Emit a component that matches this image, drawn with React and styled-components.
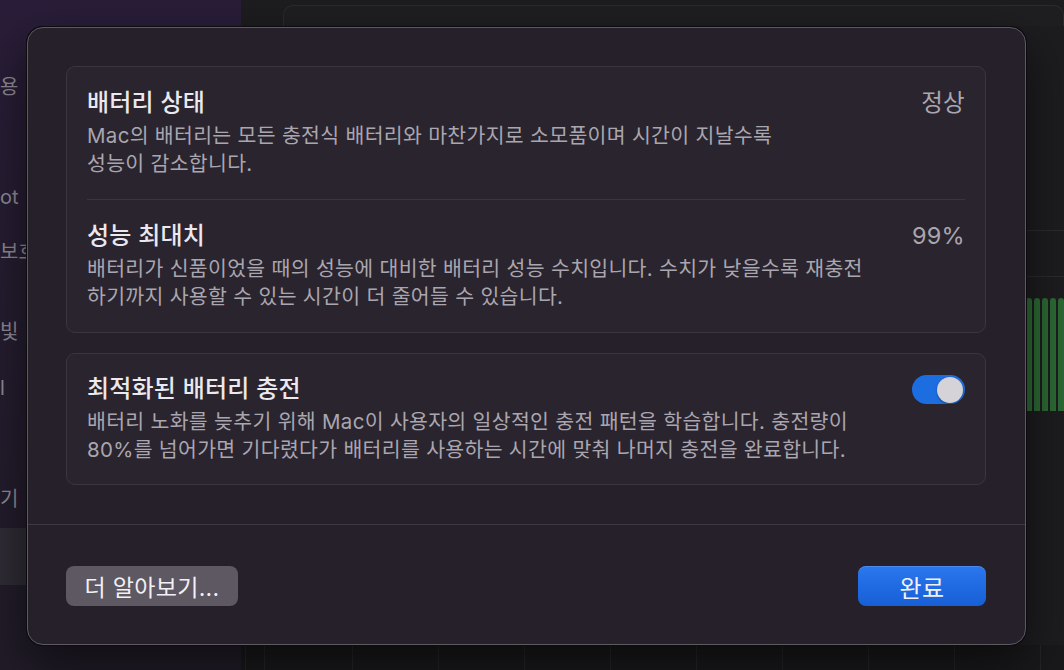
import React, { useState } from 'react'
import styled, { createGlobalStyle } from 'styled-components'

const GlobalStyle = createGlobalStyle`
html, body {
    margin: 0;
    padding: 0;
    background: #1d1c1f;
}
body {
    font-family: 'Inter', 'Noto Sans CJK KR', sans-serif;
    -webkit-font-smoothing: antialiased;
}
`

const Screen = styled.div`
position: relative;
width: 1064px;
height: 670px;
overflow: hidden;
display: flex;
background: #1d1c1f;
`

// ---- background window (mostly hidden by the sheet)

const Sidebar = styled.div`
width: 241px;
flex-shrink: 0;
display: flex;
flex-direction: column;
background: linear-gradient(180deg, #2a1d39 0%, #251d30 45%, #211c28 100%);
`

const SideItem = styled.div`
height: ${p => p.h}px;
display: flex;
align-items: center;
font-size: 20px;
color: #8f8a95;
white-space: nowrap;
background: ${p => p.selected ? '#2f2c35' : 'transparent'};
`

const MainPane = styled.div`
flex: 1;
display: flex;
flex-direction: column;
`

const TopStrip = styled.div`
height: 25px;
padding: 5px 0 0 42px;
box-sizing: border-box;
`

const TopCard = styled.div`
height: 100%;
border: 1px solid #2c2b2e;
border-bottom: none;
border-radius: 10px 10px 0 0;
background: #1f1e21;
`

const Rule = styled.div`
height: 1px;
background: #2b2a2e;
margin-top: ${p => p.gap}px;
`

const Chart = styled.div`
margin-top: 21px;
height: 113px;
display: flex;
align-items: flex-end;
justify-content: flex-end;
gap: 2px;
overflow: hidden;
`

const Bar = styled.div`
width: 6px;
flex-shrink: 0;
height: 100%;
border-radius: 3px 3px 0 0;
background: #2c6a34;
`

const Grid = styled.div`
margin-top: auto;
height: 25px;
display: flex;
background: #19181a;
`

const GridCell = styled.div`
width: ${p => p.w}px;
flex-shrink: 0;
border-right: 1px solid #242326;
`

// ---- sheet

const Sheet = styled.div`
position: absolute;
left: 27px;
top: 27px;
width: 999px;
height: 618px;
box-sizing: border-box;
border-radius: 16px;
background: #252029;
border: 1px solid #5e5a63;
box-shadow: 0 0 0 1px #0c0b0d, 0 18px 50px rgba(0, 0, 0, 0.55);
display: flex;
flex-direction: column;
`

const SheetBody = styled.div`
padding: 38px 39px 0 38px;
display: flex;
flex-direction: column;
gap: 20px;
`

const Group = styled.div`
border: 1px solid #3a3540;
border-radius: 9px;
background: #29242e;
padding: 0 20px;
`

const Row = styled.div`
display: flex;
align-items: flex-start;
gap: 20px;
padding: ${p => p.pad || '21px 0'};
border-top: ${p => p.divided ? '1px solid #3a3640' : 'none'};
`

const RowText = styled.div`
flex: 1;
`

const Title = styled.div`
font-size: 24px;
font-weight: 500;
letter-spacing: 0.2px;
line-height: 30px;
color: #ebe8ee;
`

const Desc = styled.div`
margin-top: 4px;
font-size: 20.5px;
letter-spacing: 0.3px;
line-height: 28px;
color: #aaa6af;
`

const Value = styled.div`
font-size: 23.5px;
letter-spacing: 0.3px;
line-height: 30px;
color: #aaa6af;
`

const Toggle = styled.button`
margin-top: 1px;
width: 53px;
height: 29px;
border: none;
border-radius: 15px;
padding: 0 2px;
display: flex;
align-items: center;
justify-content: ${p => p.on ? 'flex-end' : 'flex-start'};
background: ${p => p.on ? '#1c6de0' : '#4a4550'};
cursor: pointer;
`

const Knob = styled.span`
width: 26px;
height: 26px;
border-radius: 50%;
background: #d5d3d8;
box-shadow: 0 1px 2px rgba(0, 0, 0, 0.35);
`

const Footer = styled.div`
margin-top: auto;
border-top: 1px solid #3e3943;
padding: 41px 39px 38px 38px;
display: flex;
justify-content: space-between;
align-items: center;
`

const Button = styled.button`
height: 40px;
min-width: ${p => p.w}px;
padding: 0 14px;
border: none;
border-radius: 8px;
font-family: inherit;
font-size: ${p => p.primary ? 24 : 23}px;
letter-spacing: 0.3px;
color: #f2f0f4;
background: ${p => p.primary
        ? 'linear-gradient(180deg, #2a77ee 0%, #175fd6 100%)'
        : '#5d5862'};
box-shadow: ${p => p.primary ? 'inset 0 1px 0 rgba(255,255,255,0.15)' : 'none'};
cursor: pointer;
`

const sideItems = [
    { text: '용', h: 50, top: 60 },
    { text: 'ot', h: 50, top: 62 },
    { text: '보호', h: 50, top: 3 },
    { text: '빛 [', h: 50, top: 30 },
    { text: 'l', h: 50, top: 8 },
    { text: '기', h: 50, top: 59 },
]

const App = () => {
    const [optimized, setOptimized] = useState(true)

    return (
        <Screen>
            <GlobalStyle />

            <Sidebar>
                {sideItems.map((it, i) => (
                    <SideItem key={i} h={it.h} style={{ marginTop: it.top }}>{it.text}</SideItem>
                ))}
                <SideItem h={57} selected style={{ marginTop: 6 }} />
            </Sidebar>

            <MainPane>
                <TopStrip>
                    <TopCard />
                </TopStrip>
                <Rule gap={205} />
                <Rule gap={45} />
                <Chart>
                    {Array.from({ length: 90 }).map((_, i) => <Bar key={i} />)}
                </Chart>
                <Grid>
                    {[4, 18, 87, 85, 85, 85, 85, 85, 85, 85, 85].map((w, i) => <GridCell key={i} w={w} />)}
                </Grid>
            </MainPane>

            <Sheet>
                <SheetBody>
                    <Group>
                        <Row>
                            <RowText>
                                <Title>배터리 상태</Title>
                                <Desc>
                                    Mac의 배터리는 모든 충전식 배터리와 마찬가지로 소모품이며 시간이 지날수록<br />
                                    성능이 감소합니다.
                                </Desc>
                            </RowText>
                            <Value>정상</Value>
                        </Row>
                        <Row divided>
                            <RowText>
                                <Title>성능 최대치</Title>
                                <Desc>
                                    배터리가 신품이었을 때의 성능에 대비한 배터리 성능 수치입니다. 수치가 낮을수록 재충전<br />
                                    하기까지 사용할 수 있는 시간이 더 줄어들 수 있습니다.
                                </Desc>
                            </RowText>
                            <Value>99%</Value>
                        </Row>
                    </Group>

                    <Group>
                        <Row pad="20px 0 20px">
                            <RowText>
                                <Title>최적화된 배터리 충전</Title>
                                <Desc>
                                    배터리 노화를 늦추기 위해 Mac이 사용자의 일상적인 충전 패턴을 학습합니다. 충전량이<br />
                                    80%를 넘어가면 기다렸다가 배터리를 사용하는 시간에 맞춰 나머지 충전을 완료합니다.
                                </Desc>
                            </RowText>
                            <Toggle on={optimized} onClick={() => setOptimized(!optimized)}>
                                <Knob />
                            </Toggle>
                        </Row>
                    </Group>
                </SheetBody>

                <Footer>
                    <Button w={172}>더 알아보기...</Button>
                    <Button w={128} primary>완료</Button>
                </Footer>
            </Sheet>
        </Screen>
    )
}

export default App
